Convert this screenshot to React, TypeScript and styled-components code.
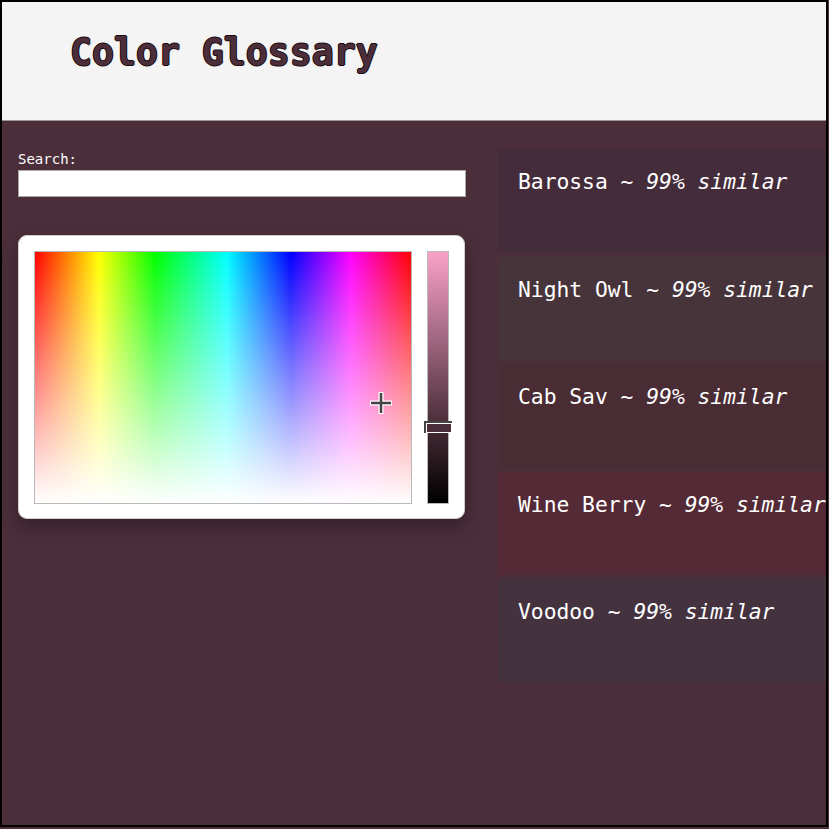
import React, { useState } from "react";
import styled, { createGlobalStyle } from "styled-components";

const GlobalStyle = createGlobalStyle`
  html, body {
    margin: 0;
    padding: 0;
    background: #4b2e3a;
  }
  * {
    box-sizing: border-box;
  }
`;

const mono = `"DejaVu Sans Mono", "Liberation Mono", monospace`;

const Frame = styled.div`
  width: 828px;
  height: 827px;
  border: 2px solid #000;
  background: #4b2e3a;
  overflow: hidden;
  font-family: ${mono};
`;

const Header = styled.header`
  height: 119px;
  background: #f4f4f4;
  border-bottom: 1px solid #9a9a9a;
  display: flex;
  align-items: center;
  padding-left: 68px;
  padding-bottom: 18px;
`;

const Title = styled.h1`
  margin: 0;
  font-family: ${mono};
  font-size: 36.5px;
  font-weight: bold;
  color: #4b2e3a;
  text-shadow: -1px 0 0 #1a0d12, 1px 0 0 #1a0d12, 0 -1px 0 #1a0d12,
    0 1px 0 #1a0d12;
`;

const Main = styled.main`
  display: grid;
  grid-template-columns: 448px 1fr;
  gap: 32px;
  padding: 28px 0 0 16px;
`;

const LeftColumn = styled.div`
  display: flex;
  flex-direction: column;
  padding-top: 2px;
`;

const Label = styled.label`
  font-size: 14px;
  color: #ffffff;
  line-height: 16px;
  margin-bottom: 3px;
`;

const SearchInput = styled.input`
  width: 448px;
  height: 27px;
  border: 1px solid #a9a9a9;
  background: #fff;
  padding: 2px 4px;
  font-family: ${mono};
  outline: none;
`;

const Picker = styled.div`
  margin-top: 38px;
  width: 447px;
  height: 284px;
  background: #fff;
  border-radius: 9px;
  border: 1px solid #cfcfcf;
  box-shadow: 0 8px 18px rgba(0, 0, 0, 0.3);
  padding: 15px;
  display: flex;
  gap: 15px;
`;

const SatArea = styled.div`
  position: relative;
  width: 378px;
  height: 253px;
  border: 1px solid #b8b8b8;
  background: linear-gradient(to bottom, rgba(255, 255, 255, 0), #ffffff),
    linear-gradient(
      to right,
      #ff0000 0%,
      #ffff00 17%,
      #00ff00 32%,
      #00ffff 51%,
      #0000ff 68%,
      #ff00ff 84%,
      #ff0000 100%
    );
`;

const Crosshair = styled.div`
  position: absolute;
  width: 24px;
  height: 24px;
  transform: translate(-50%, -50%);
  pointer-events: none;
`;

const LightSlider = styled.div`
  position: relative;
  width: 22px;
  height: 253px;
  border: 1px solid #b8b8b8;
  background: linear-gradient(to bottom, #f9a2c8 0%, #4b2e3a 68%, #000 100%);
`;

const Handle = styled.div<{ $swatch: string }>`
  position: absolute;
  left: -4px;
  width: 28px;
  height: 12px;
  background: #444;
  padding: 2px;
  transform: translateY(-50%);

  &::after {
    content: "";
    display: block;
    width: 100%;
    height: 100%;
    border: 1.5px solid #fff;
    background: ${(p) => p.$swatch};
  }
`;

const List = styled.ul`
  list-style: none;
  margin: 0;
  padding: 0;
  display: flex;
  flex-direction: column;
  gap: 4px;
`;

const Item = styled.li<{ $bg: string }>`
  height: 103.5px;
  background: ${(p) => p.$bg};
  color: #fff;
  font-size: 21.3px;
  line-height: 26px;
  padding: 20px 0 0 20px;
  white-space: nowrap;
`;

const Similar = styled.em`
  font-style: italic;
`;

const matches = [
  { name: "Barossa", bg: "#452c3a" },
  { name: "Night Owl", bg: "#47343a" },
  { name: "Cab Sav", bg: "#4a2c35" },
  { name: "Wine Berry", bg: "#532a35" },
  { name: "Voodoo", bg: "#45323f" },
];

export default function App() {
  const [search, setSearch] = useState("");
  const cross = { x: 346, y: 151 };
  const light = 175;

  return (
    <>
      <GlobalStyle />
      <Frame>
        <Header>
          <Title>Color Glossary</Title>
        </Header>
        <Main>
          <LeftColumn>
            <Label htmlFor="search">Search:</Label>
            <SearchInput
              id="search"
              type="text"
              value={search}
              onChange={(e) => setSearch(e.target.value)}
            />
            <Picker>
              <SatArea>
                <Crosshair style={{ left: cross.x, top: cross.y }}>
                  <svg width="24" height="24" viewBox="0 0 24 24">
                    <path
                      d="M12 1v22M1 12h22"
                      stroke="#fff"
                      strokeWidth="5"
                      fill="none"
                    />
                    <path
                      d="M12 2v20M2 12h20"
                      stroke="#444"
                      strokeWidth="2.5"
                      fill="none"
                    />
                  </svg>
                </Crosshair>
              </SatArea>
              <LightSlider>
                <Handle $swatch="#4b2e3a" style={{ top: light }} />
              </LightSlider>
            </Picker>
          </LeftColumn>
          <List>
            {matches.map((m) => (
              <Item key={m.name} $bg={m.bg}>
                {m.name} ~ <Similar>99% similar</Similar>
              </Item>
            ))}
          </List>
        </Main>
      </Frame>
    </>
  );
}
